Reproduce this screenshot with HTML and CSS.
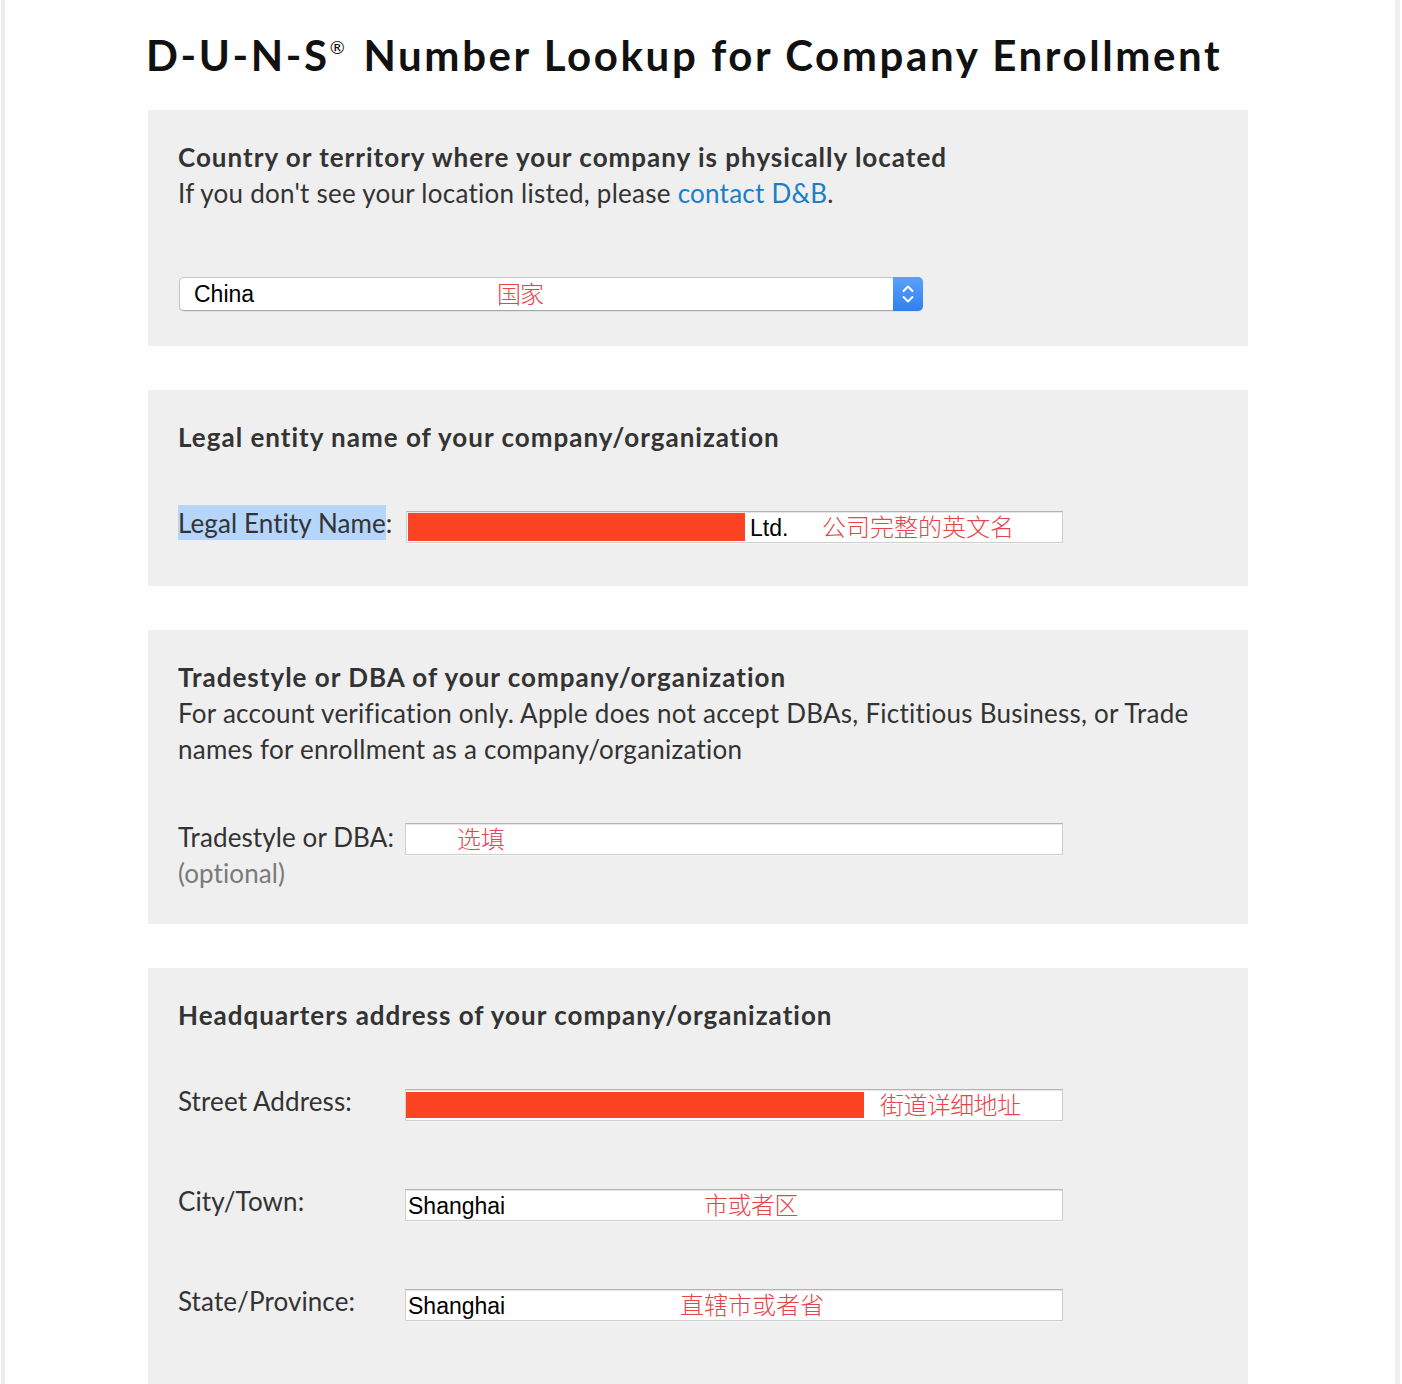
FILE: index.html
```html
<!DOCTYPE html>
<html lang="en">
<head>
<meta charset="utf-8">
<title>D-U-N-S Number Lookup</title>
<link rel="stylesheet" href="styles.css">
</head>
<body>
<div class="frame">
  <main class="content">
    <h1 class="title">D-U-N-S<sup class="reg">®</sup> Number Lookup for Company Enrollment</h1>

    <section class="panel panel-country">
      <h2 class="heading">Country or territory where your company is physically located</h2>
      <p class="text">If you don't see your location listed, please <a class="link" href="#">contact D&amp;B</a>.</p>
      <div class="select">
        <span class="select-value">China</span>
        <span class="note note-country">国家</span>
        <span class="select-arrow">
          <svg width="14" height="26" viewBox="0 0 14 26"><path d="M2.5 10 L7 5.5 L11.5 10" fill="none" stroke="#fff" stroke-width="2" stroke-linecap="round" stroke-linejoin="round"/><path d="M2.5 16 L7 20.5 L11.5 16" fill="none" stroke="#fff" stroke-width="2" stroke-linecap="round" stroke-linejoin="round"/></svg>
        </span>
      </div>
    </section>

    <section class="panel panel-legal">
      <h2 class="heading">Legal entity name of your company/organization</h2>
      <div class="row row-first">
        <div class="label"><span class="selected">Legal Entity Name</span>:</div>
        <div class="field">
          <span class="redact redact-legal"></span>
          <span class="value">Ltd.</span>
          <span class="note note-legal">公司完整的英文名</span>
        </div>
      </div>
    </section>

    <section class="panel panel-trade">
      <h2 class="heading">Tradestyle or DBA of your company/organization</h2>
      <p class="text">For account verification only. Apple does not accept DBAs, Fictitious Business, or Trade names for enrollment as a company/organization</p>
      <div class="row row-first">
        <div class="label">Tradestyle or DBA:<br><span class="optional">(optional)</span></div>
        <div class="field field-trade">
          <span class="note note-trade">选填</span>
        </div>
      </div>
    </section>

    <section class="panel panel-hq">
      <h2 class="heading">Headquarters address of your company/organization</h2>
      <div class="row row-first">
        <div class="label">Street Address:</div>
        <div class="field">
          <span class="redact redact-street"></span>
          <span class="note note-street">街道详细地址</span>
        </div>
      </div>
      <div class="row row-next">
        <div class="label">City/Town:</div>
        <div class="field">
          <span class="value value-city">Shanghai</span>
          <span class="note note-city">市或者区</span>
        </div>
      </div>
      <div class="row row-next">
        <div class="label">State/Province:</div>
        <div class="field">
          <span class="value value-city">Shanghai</span>
          <span class="note note-state">直辖市或者省</span>
        </div>
      </div>
    </section>
  </main>
</div>
</body>
</html>
```

FILE: styles.css
```css
html, body {
  margin: 0;
  padding: 0;
  background: #ffffff;
}

body {
  font-family: Lato, "Open Sans", "Noto Sans", sans-serif;
  color: #333333;
  -webkit-font-smoothing: antialiased;
}

.frame {
  min-height: 1384px;
  margin: 0 2px 0 1px;
  border-left: 4px solid #ececec;
  border-right: 5px solid #efefef;
  background: #fefefe;
  overflow: hidden;
}

.content {
  width: 1100px;
  margin-left: 143px;
}

.title {
  margin: 28px 0 0 -2px;
  height: 54px;
  font-size: 42px;
  line-height: 54px;
  font-weight: 700;
  color: #111111;
  letter-spacing: 2.6px;
  white-space: nowrap;
}

.reg {
  font-size: 18px;
  font-weight: 400;
  letter-spacing: 0;
  vertical-align: 0;
  position: relative;
  top: -17px;
  margin-left: 0;
  margin-right: 6px;
}

.panel {
  background: #efefef;
  padding: 29px 30px 0;
  margin-top: 44px;
}

.panel-country {
  margin-top: 28px;
  padding-bottom: 35px;
}

.panel-legal {
  padding-bottom: 43px;
}

.panel-trade {
  padding-bottom: 33px;
}

.panel-hq {
  padding-bottom: 80px;
}

.heading {
  margin: 0;
  font-size: 26px;
  line-height: 36px;
  font-weight: 700;
  color: #333333;
  letter-spacing: 1px;
}

.text {
  margin: 0;
  font-size: 26px;
  line-height: 36px;
  font-weight: 400;
  color: #333333;
  letter-spacing: 0.25px;
  max-width: 1040px;
}

.link {
  color: #1b7fc4;
  text-decoration: none;
}

.select {
  position: relative;
  margin-top: 66px;
  margin-left: 1px;
  width: 744px;
  height: 34px;
  box-sizing: border-box;
  border: 1px solid #c4c4c4;
  border-bottom-color: #a8a8a8;
  border-radius: 5px;
  background: #ffffff;
  box-shadow: 0 1px 1px rgba(0, 0, 0, 0.06);
}

.select-value {
  position: absolute;
  left: 14px;
  top: 3px;
  font-family: "Liberation Sans", Arial, sans-serif;
  font-size: 23px;
  line-height: 27px;
  color: #000000;
}

.select-arrow {
  position: absolute;
  right: -1px;
  top: -1px;
  width: 30px;
  height: 34px;
  border-radius: 0 5px 5px 0;
  background: linear-gradient(#5aa2fb, #2f7ff0);
  display: flex;
  align-items: center;
  justify-content: center;
}

.row {
  display: flex;
  align-items: flex-start;
}

.row-first {
  margin-top: 50px;
}

.panel-trade .row-first {
  margin-top: 52px;
}

.row-next {
  margin-top: 62px;
}

.label {
  width: 227px;
  flex: none;
  font-size: 26px;
  line-height: 36px;
  color: #333333;
  letter-spacing: 0.1px;
}

.selected {
  background: #b5d5fb;
  padding: 2px 0 1px;
}

.optional {
  color: #7a7a7a;
}

.field {
  position: relative;
  margin-top: 6px;
  width: 658px;
  height: 32px;
  box-sizing: border-box;
  border: 1px solid #cfcfcf;
  border-top-color: #b4b4b4;
  background: #ffffff;
  box-shadow: inset 0 1px 0 #e6e6e6, 0 1px 0 #f6f6f6;
}

.panel-legal .field {
  margin-left: 1px;
  width: 657px;
}

.field-trade {
  margin-top: 4px;
}

.redact {
  position: absolute;
  background: #fc4323;
}

.redact-legal {
  left: 1px;
  top: 1px;
  width: 337px;
  height: 28px;
}

.redact-street {
  left: 0;
  top: 2px;
  width: 458px;
  height: 26px;
}

.value {
  position: absolute;
  top: 3px;
  font-family: "Liberation Sans", Arial, sans-serif;
  font-size: 23px;
  line-height: 27px;
  color: #000000;
}

.panel-legal .value {
  left: 343px;
}

.value-city {
  left: 2px;
}

.note {
  position: absolute;
  font-family: "Noto Sans CJK SC", sans-serif;
  font-size: 24px;
  line-height: 28px;
  font-weight: 300;
  color: #e84349;
  white-space: nowrap;
  top: 0;
}

.note-country { left: 317px; top: 1px; letter-spacing: -1px; }
.note-legal { left: 415px; }
.note-trade { left: 51px; }
.note-street { left: 474px; letter-spacing: -0.6px; }
.note-city { left: 298px; letter-spacing: -0.5px; }
.note-state { left: 274px; }
```
